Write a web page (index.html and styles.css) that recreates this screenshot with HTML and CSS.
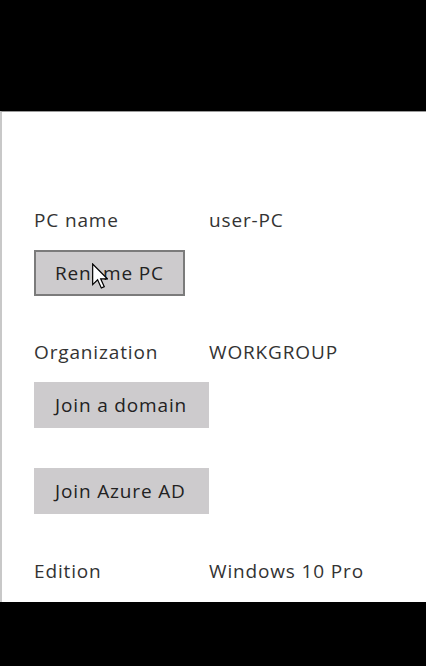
FILE: index.html
```html
<!DOCTYPE html>
<html>
<head>
<meta charset="utf-8">
<link rel="stylesheet" href="styles.css">
</head>
<body>
<div class="top-band"></div>
<div class="panel">
  <div class="row row-pc">
    <span class="label">PC name</span>
    <span class="value">user-PC</span>
  </div>
  <div class="btn-wrap btn-rename-wrap">
    <button class="btn btn-focus">Rename PC</button>
    <svg class="cursor" width="16" height="26" viewBox="0 0 12 19">
      <path d="M0.5 0.5 L0.5 16 L4.2 12.4 L7 18.5 L9.2 17.5 L6.5 11.6 L11.5 11.6 Z" fill="#fff" stroke="#000" stroke-width="0.9" stroke-linejoin="miter"/>
    </svg>
  </div>
  <div class="row row-org">
    <span class="label">Organization</span>
    <span class="value">WORKGROUP</span>
  </div>
  <div class="btn-wrap btn-domain-wrap">
    <button class="btn btn-wide">Join a domain</button>
  </div>
  <div class="btn-wrap btn-azure-wrap">
    <button class="btn btn-wide">Join Azure AD</button>
  </div>
  <div class="row row-edition">
    <span class="label">Edition</span>
    <span class="value">Windows 10 Pro</span>
  </div>
</div>
</body>
</html>
```
FILE: styles.css
```css
html, body {
  margin: 0;
  padding: 0;
  background: #000;
  width: 426px;
  height: 666px;
  overflow: hidden;
}
body {
  font-family: "Open Sans", "Noto Sans", sans-serif;
  font-size: 19px;
  letter-spacing: 0.85px;
  color: #333;
}
.top-band {
  height: 111px;
  background: #000;
}
.panel {
  height: 491px;
  background: #fff;
  border-top: 1px solid #9a9a9a;
  border-left: 2px solid #c8c8c8;
  box-sizing: border-box;
  padding-left: 32px;
  padding-top: 96px;
  display: flex;
  flex-direction: column;
  align-items: flex-start;
  overflow: hidden;
}
.row {
  display: flex;
  height: 24px;
  align-items: center;
  line-height: 24px;
}
.label {
  width: 175px;
}
.btn-wrap {
  position: relative;
}
.btn {
  font-family: inherit;
  font-size: 19px;
  letter-spacing: 0.85px;
  color: #222;
  background: #cdcbcd;
  border: 2px solid transparent;
  height: 46px;
  padding: 0 19px;
  margin: 0;
  box-sizing: border-box;
  display: flex;
  align-items: center;
}
.btn-wide {
  min-width: 175px;
}
.btn-focus {
  border-color: #7b7b7b;
}
.btn-rename-wrap { margin-top: 18px; }
.row-org { margin-top: 44px; }
.btn-domain-wrap { margin-top: 18px; }
.btn-azure-wrap { margin-top: 40px; }
.row-edition { margin-top: 45px; }
.cursor {
  position: absolute;
  left: 58px;
  top: 13px;
}
```
